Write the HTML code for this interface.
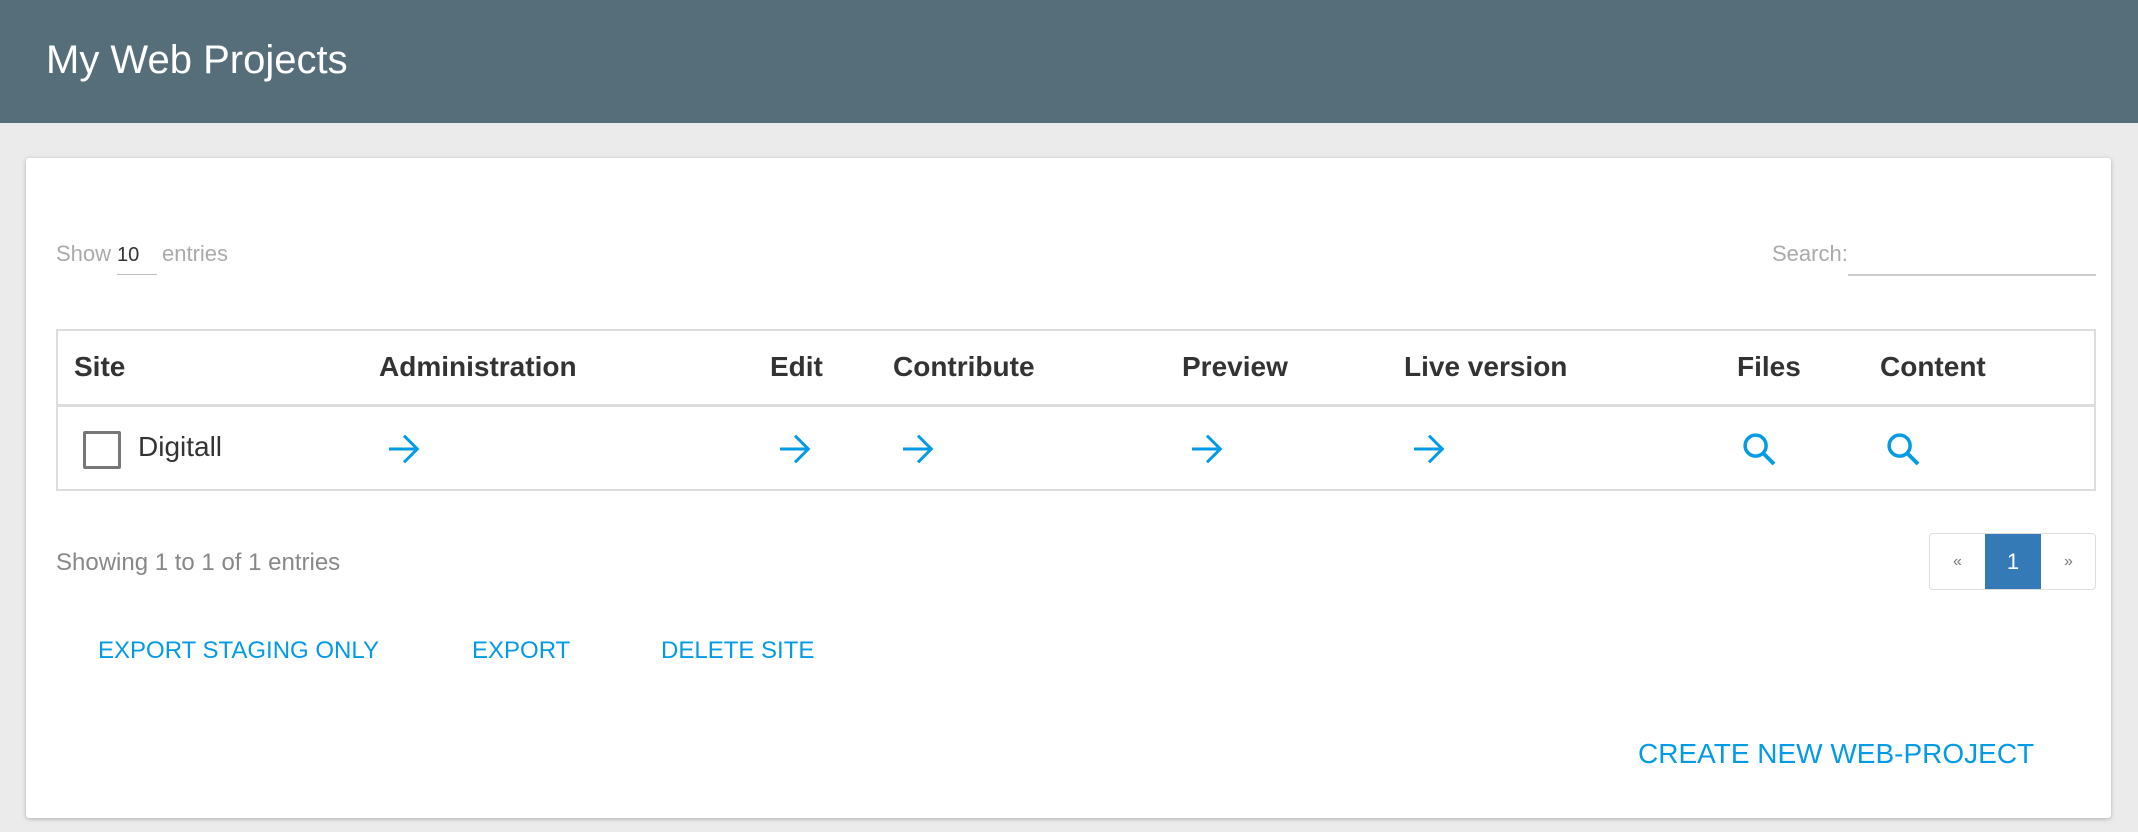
<!DOCTYPE html>
<html><head><meta charset="utf-8"><style>
*{margin:0;padding:0;box-sizing:border-box}
body{width:2138px;height:832px;background:#ebebeb;font-family:"Liberation Sans",Arial,sans-serif;position:relative;overflow:hidden}
.hdr{position:absolute;left:0;top:0;width:2138px;height:123px;background:#566e7a}
.hdr h1{position:absolute;left:46px;top:36px;font-size:40px;font-weight:normal;color:#fff;line-height:48px}
.card{position:absolute;left:26px;top:158px;width:2085px;height:660px;background:#fff;border-radius:3px;box-shadow:0 1px 4px rgba(0,0,0,.25)}
.a{position:absolute;white-space:nowrap}
.gray{color:#aaa;font-size:22px}
.tbl{position:absolute;left:56px;top:329px;width:2040px;height:162px;border:2px solid #ddd}
.tbl .hl{position:absolute;left:0;right:0;top:73px;height:3px;background:#ddd}
.th{position:absolute;top:20px;font-size:28px;font-weight:bold;color:#333}
.ic{position:absolute;top:98px}
.btn{position:absolute;color:#039be5;font-size:24px}
</style></head><body>
<div class="hdr"><h1>My Web Projects</h1></div>
<div class="card"></div>
<div class="a gray" style="left:56px;top:241px">Show</div>
<div class="a" style="left:117px;top:244px;font-size:20px;color:#333">10</div>
<div class="a" style="left:117px;top:274px;width:40px;height:1px;background:#bbb"></div>
<div class="a gray" style="left:162px;top:241px">entries</div>
<div class="a gray" style="left:1772px;top:241px">Search:</div>
<div class="a" style="left:1848px;top:274px;width:248px;height:2px;background:#ccc"></div>
<div class="tbl">
 <div class="hl"></div>
 <div class="th" style="left:16px">Site</div>
 <div class="th" style="left:321px">Administration</div>
 <div class="th" style="left:712px">Edit</div>
 <div class="th" style="left:835px">Contribute</div>
 <div class="th" style="left:1124px">Preview</div>
 <div class="th" style="left:1346px">Live version</div>
 <div class="th" style="left:1679px">Files</div>
 <div class="th" style="left:1822px">Content</div>
 <div class="a" style="left:25px;top:100px;width:38px;height:38px;border:3px solid #777;border-radius:2px"></div>
 <div class="a" style="left:80px;top:100px;font-size:28px;color:#333">Digitall</div>
 <svg class="ic" style="left:326px" width="40" height="40" viewBox="0 0 24 24"><path d="M3 12h17M12 4l8 8-8 8" fill="none" stroke="#039be5" stroke-width="1.8"/></svg>
 <svg class="ic" style="left:717px" width="40" height="40" viewBox="0 0 24 24"><path d="M3 12h17M12 4l8 8-8 8" fill="none" stroke="#039be5" stroke-width="1.8"/></svg>
 <svg class="ic" style="left:840px" width="40" height="40" viewBox="0 0 24 24"><path d="M3 12h17M12 4l8 8-8 8" fill="none" stroke="#039be5" stroke-width="1.8"/></svg>
 <svg class="ic" style="left:1129px" width="40" height="40" viewBox="0 0 24 24"><path d="M3 12h17M12 4l8 8-8 8" fill="none" stroke="#039be5" stroke-width="1.8"/></svg>
 <svg class="ic" style="left:1351px" width="40" height="40" viewBox="0 0 24 24"><path d="M3 12h17M12 4l8 8-8 8" fill="none" stroke="#039be5" stroke-width="1.8"/></svg>
 <svg class="ic" style="left:1681px" width="42" height="42" viewBox="0 0 24 24"><circle cx="9.5" cy="9.5" r="6" fill="none" stroke="#039be5" stroke-width="2"/><path d="M14 14l6 6" stroke="#039be5" stroke-width="2.2"/></svg>
 <svg class="ic" style="left:1825px" width="42" height="42" viewBox="0 0 24 24"><circle cx="9.5" cy="9.5" r="6" fill="none" stroke="#039be5" stroke-width="2"/><path d="M14 14l6 6" stroke="#039be5" stroke-width="2.2"/></svg>
</div>
<div class="a" style="left:56px;top:549px;font-size:24px;color:#888">Showing 1 to 1 of 1 entries</div>
<div class="a" style="left:1929px;top:533px;width:167px;height:57px;border:1px solid #ddd;border-radius:4px;overflow:hidden">
 <div class="a" style="left:0;top:0;width:55px;height:55px;line-height:55px;text-align:center;color:#777;font-size:16px">«</div>
 <div class="a" style="left:55px;top:0;width:56px;height:55px;line-height:55px;text-align:center;background:#337ab7;color:#fff;font-size:22px">1</div>
 <div class="a" style="left:111px;top:0;width:55px;height:55px;line-height:55px;text-align:center;color:#777;font-size:16px">»</div>
</div>
<div class="btn a" style="left:98px;top:637px">EXPORT STAGING ONLY</div>
<div class="btn a" style="left:472px;top:637px">EXPORT</div>
<div class="btn a" style="left:661px;top:637px">DELETE SITE</div>
<div class="btn a" style="left:1638px;top:738px;font-size:28px">CREATE NEW WEB-PROJECT</div>
</body></html>
